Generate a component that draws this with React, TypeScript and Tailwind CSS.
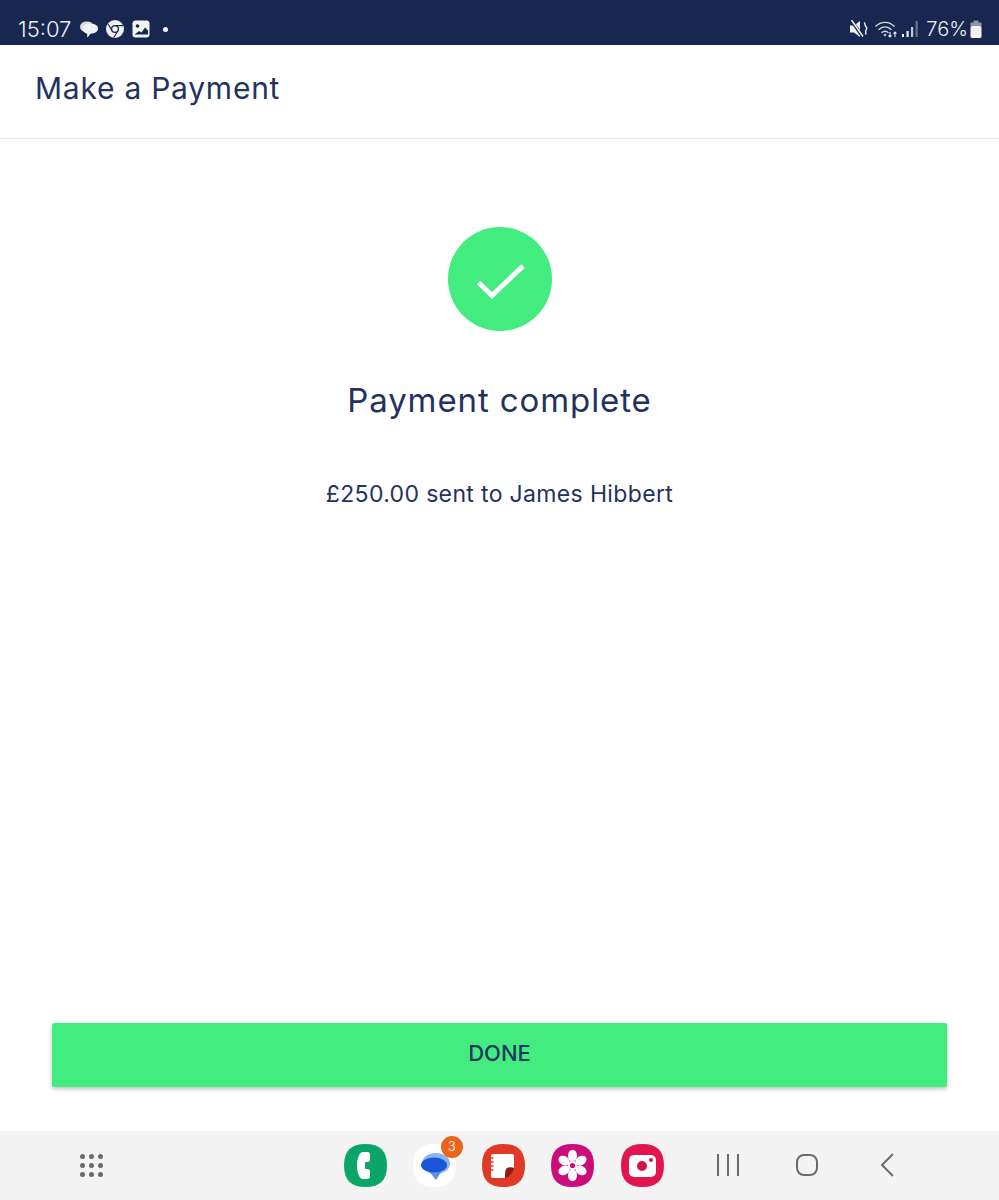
const squircle = 'M21.500 0C36 0 43 7 43 21.500S36 43 21.500 43 0 36 0 21.500 7 0 21.500 0z'

function StatusIcons() {
  return (
    <div className="flex items-center gap-[8px] ml-[9px]">
      {/* chat bubbles */}
      <svg width="18" height="18" viewBox="0 0 18 18">
        <path d="M0 7c0-3.500 3-5.500 7-5.500 2 0 4 .5 5 1.500L5 12C2 11.500 0 9.500 0 7z" fill="#d5d9e0" />
        <path d="M2.500 8.500c0-3 3-5 7.500-5s8 1.500 8 5-3.500 5-6.500 5c-.6 0-1 .2-1.300.5L8 17c-.4.300-.8.100-.8-.3v-3C4.500 13 2.500 11.200 2.500 8.500z" fill="#f0f2f4" />
      </svg>
      {/* chrome */}
      <svg width="18" height="18" viewBox="0 0 18 18">
        <circle cx="9" cy="9" r="9" fill="#f0f2f4" />
        <circle cx="9" cy="9" r="3.400" fill="#f0f2f4" stroke="#182750" strokeWidth="1.300" />
        <path d="M9 5.600h8M6 10.800L2.200 4.200M11.900 10.800L7.800 17.500" stroke="#182750" strokeWidth="1.100" fill="none" />
      </svg>
      {/* gallery */}
      <svg width="18" height="18" viewBox="0 0 18 18">
        <rect x="0.500" y="0.500" width="17" height="17" rx="3" fill="#f0f2f4" />
        <circle cx="5.500" cy="6" r="1.800" fill="#182750" />
        <path d="M2.500 14.500l4.500-3.500 2.500 1.500 3.500-5 3 3v4z" fill="#182750" />
      </svg>
      <span className="ml-[5px] w-[5px] h-[5px] rounded-full bg-[#f0f2f4]" />
    </div>
  )
}

function SystemIcons() {
  return (
    <div className="flex items-center">
      {/* muted speaker */}
      <svg width="18" height="18" viewBox="0 0 18 18">
        <path d="M0 5.500h4L10 1v16l-6-4.500H0z" fill="#f0f2f4" />
        <path d="M1 0l11.500 16.500" stroke="#182750" strokeWidth="3.200" />
        <path d="M1.500 0L13 16.500" stroke="#f0f2f4" strokeWidth="1.500" />
        <path d="M14 2.500c1.800 1 .5 2.800 1.700 3.800s1.200 2.500.3 3.800.6 2.800-.6 4.400" stroke="#f0f2f4" strokeWidth="1.400" fill="none" />
      </svg>
      {/* wifi */}
      <svg className="ml-[7px]" width="24" height="18" viewBox="0 0 24 18" fill="none">
        <path d="M0.500 6.500C6 1 14 1 19.500 6.500M3.500 9.800C7.500 6 12.500 6 16.500 9.800M6.500 12.800c2.200-2 4.800-2 7 0" stroke="#d6d9e0" strokeWidth="1.400" />
        <path d="M8.500 15l1.500-1.500L11.500 15 10 16.500z" fill="#d6d9e0" />
        <path d="M15 12v5M13.500 15.300l1.500 1.700 1.500-1.700M20 17v-5M18.500 13.700L20 12l1.500 1.700" stroke="#f0f2f4" strokeWidth="1.100" />
      </svg>
      {/* signal */}
      <svg className="ml-[2px]" width="18" height="18" viewBox="0 0 18 18">
        <rect x="1" y="14" width="2" height="3" fill="#f0f2f4" />
        <rect x="5.500" y="11" width="2.200" height="6" fill="#f0f2f4" />
        <rect x="10" y="7" width="2.200" height="10" fill="#c4c8d2" />
        <rect x="14.500" y="1" width="2.200" height="16" fill="#69728c" />
      </svg>
      <span className="ml-[7px] text-[20px] leading-none text-[#eef0f3] font-light">76%</span>
      {/* battery */}
      <svg className="ml-[2px]" width="12" height="19" viewBox="0 0 12 19">
        <rect x="3.500" y="0.500" width="5" height="3" fill="#8d94a8" />
        <rect x="0.500" y="2.500" width="11" height="4" fill="#8d94a8" />
        <rect x="0.500" y="6" width="11" height="12" rx="1.500" fill="#f0f2f4" />
      </svg>
    </div>
  )
}

function DockApps() {
  return (
    <div className="flex items-center gap-[26.300px]">
      {/* phone */}
      <svg width="43" height="43" viewBox="0 0 43 43">
        <path d={squircle} fill="#0ba568" />
        <path d="M19 8h4.500C25 8 26 9 26 10.500v5C26 17 25 18 23.500 18H22c-.6 0-1 .4-1 1v5c0 .6.400 1 1 1h1.500c1.500 0 2.500 1 2.500 2.500v5c0 1.500-1 2.500-2.500 2.500H19c-3.500 0-6-6-6-13.500S15.500 8 19 8z" fill="#fff" />
      </svg>
      {/* messages */}
      <div className="relative w-[43px] h-[43px]">
        <svg width="43" height="43" viewBox="0 0 43 43">
          <path d={squircle} fill="#ffffff" />
          <ellipse cx="23" cy="19.500" rx="14" ry="10.500" fill="#8db1f4" />
          <path d="M15 26h14l-5.500 9.500c-.4.500-.9.300-1.100-.3z" fill="#5f8eea" />
          <ellipse cx="21" cy="21" rx="13" ry="7.500" fill="#1857d8" />
        </svg>
        <span className="absolute -top-[8px] right-[-7px] flex h-[22px] w-[22px] items-center justify-center rounded-full bg-[#ea6419] text-[13px] text-[#f6e3d6]">3</span>
      </div>
      {/* notes */}
      <svg width="43" height="43" viewBox="0 0 43 43">
        <path d={squircle} fill="#e03a26" />
        <path d="M11 10h19c1.200 0 2 .8 2 2v12l-9 10H11c-1.200 0-2-.8-2-2V12c0-1.200.8-2 2-2z" fill="#fff" />
        <path d="M32 24c-2-1-7-1-8 1s-1 6-1 9c4-1 8-5 9-10z" fill="#8f1c14" />
        <path d="M8.500 14h3M8.500 18h3M8.500 22h3M8.500 26h3" stroke="#e03a26" strokeWidth="1.300" />
      </svg>
      {/* gallery flower */}
      <svg width="43" height="43" viewBox="0 0 43 43">
        <path d={squircle} fill="#cb0d7b" />
        {[0, 60, 120, 180, 240, 300].map((a) => (
          <ellipse key={a} cx="21.500" cy="11.800" rx="4.500" ry="6" fill="#fff" transform={`rotate(${a} 21.500 21.500)`} />
        ))}
        <circle cx="21.500" cy="21.500" r="4.500" fill="#fff" />
        <circle cx="21.500" cy="21.500" r="2.600" fill="#cb0d7b" />
      </svg>
      {/* camera */}
      <svg width="43" height="43" viewBox="0 0 43 43">
        <path d={squircle} fill="#e3154f" />
        <rect x="8" y="11" width="27" height="22" rx="5" fill="#fff" />
        <circle cx="21" cy="22" r="5" fill="#d5124a" />
        <circle cx="30" cy="16" r="2" fill="#d5124a" />
      </svg>
    </div>
  )
}

export default function App() {
  return (
    <div className="flex h-[1200px] w-full flex-col bg-white font-['Inter',sans-serif] text-[#23325f]">
      {/* Status bar */}
      <div className="flex h-[45px] items-center justify-between bg-[#182750] pl-[18px] pr-[17px] pt-[13px]">
        <div className="flex items-center">
          <span className="text-[22px] leading-none font-light text-[#eef0f3]">15:07</span>
          <StatusIcons />
        </div>
        <SystemIcons />
      </div>

      {/* Header */}
      <div className="flex h-[94px] items-center border-b border-[#e8e8e8] pl-[35px]">
        <h1 className="text-[30px] leading-none font-normal tracking-[0.750px] mt-[-7px]">Make a Payment</h1>
      </div>

      {/* Body */}
      <div className="flex flex-1 flex-col items-center px-[52px] pt-[88px] pb-[44px]">
        <div className="flex h-[104px] w-[104px] items-center justify-center rounded-full bg-[#43ec7e]">
          <svg width="104" height="104" viewBox="0 0 104 104" fill="none">
            <path d="M30.500 55.500L44 68.500 75 39" stroke="#fff" strokeWidth="5" />
          </svg>
        </div>
        <h2 className="mt-[49px] text-[33px] leading-[40px] font-normal tracking-[0.900px]">Payment complete</h2>
        <p className="mt-[60px] text-[23px] leading-[28px] font-normal tracking-[0.350px]">£250.00 sent to James Hibbert</p>
        <button className="mt-auto h-[64px] w-full rounded-[2px] bg-[#43ec7e] pb-[4px] text-[22px] font-medium text-[#17395f] shadow-[0_2px_4px_rgba(0,0,0,0.25)]">
          DONE
        </button>
      </div>

      {/* Navigation dock */}
      <div className="flex h-[69px] items-center bg-[#f4f4f4] pl-[80px]">
        <div className="grid grid-cols-3 gap-x-[4.500px] gap-y-[4.500px]">
          {Array.from({ length: 9 }).map((_, i) => (
            <span key={i} className="h-[4.500px] w-[4.500px] rounded-full bg-[#6a6a6a]" />
          ))}
        </div>
        <div className="ml-[241px]">
          <DockApps />
        </div>
        <svg className="ml-[52px] -mt-[1px]" width="24" height="24" viewBox="0 0 24 24" stroke="#6c6c6c" strokeWidth="2" fill="none">
          <path d="M2 1v22M12 1v22M22 1v22" />
        </svg>
        <svg className="ml-[55px] -mt-[1px]" width="24" height="24" viewBox="0 0 24 24" fill="none" stroke="#6c6c6c" strokeWidth="2">
          <rect x="2" y="2" width="20" height="20" rx="7" />
        </svg>
        <svg className="ml-[60px] -mt-[1px]" width="16" height="24" viewBox="0 0 16 24" fill="none" stroke="#6c6c6c" strokeWidth="2">
          <path d="M14 1L3 12l11 11" />
        </svg>
      </div>
    </div>
  )
}
